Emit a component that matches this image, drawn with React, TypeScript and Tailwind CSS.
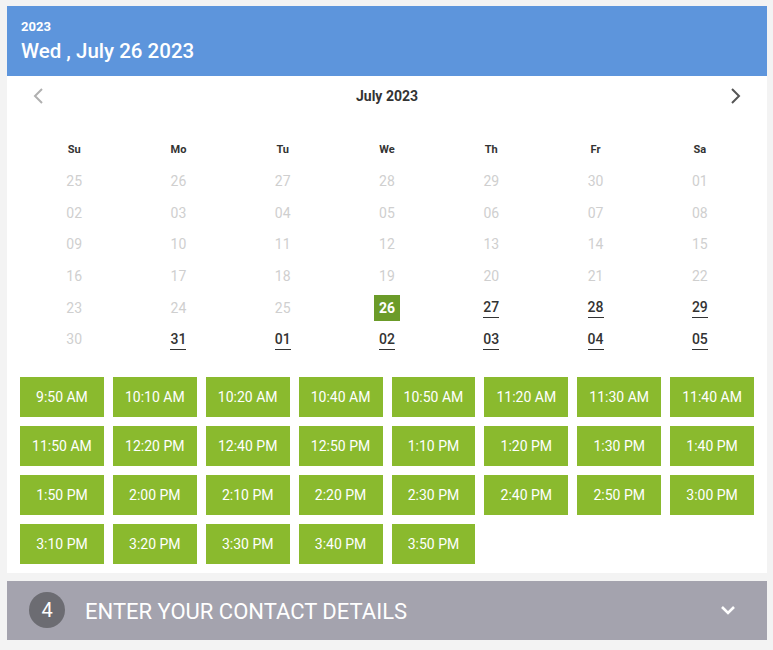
import React from "react";

const DAY_NAMES = ["Su", "Mo", "Tu", "We", "Th", "Fr", "Sa"];

type Day = { label: string; kind: "off" | "on" | "sel" };

const WEEKS: Day[][] = [
  ["25", "26", "27", "28", "29", "30", "01"].map((d) => ({ label: d, kind: "off" as const })),
  ["02", "03", "04", "05", "06", "07", "08"].map((d) => ({ label: d, kind: "off" as const })),
  ["09", "10", "11", "12", "13", "14", "15"].map((d) => ({ label: d, kind: "off" as const })),
  ["16", "17", "18", "19", "20", "21", "22"].map((d) => ({ label: d, kind: "off" as const })),
  [
    { label: "23", kind: "off" },
    { label: "24", kind: "off" },
    { label: "25", kind: "off" },
    { label: "26", kind: "sel" },
    { label: "27", kind: "on" },
    { label: "28", kind: "on" },
    { label: "29", kind: "on" },
  ],
  [
    { label: "30", kind: "off" },
    { label: "31", kind: "on" },
    { label: "01", kind: "on" },
    { label: "02", kind: "on" },
    { label: "03", kind: "on" },
    { label: "04", kind: "on" },
    { label: "05", kind: "on" },
  ],
];

const SLOTS = [
  "9:50 AM", "10:10 AM", "10:20 AM", "10:40 AM", "10:50 AM", "11:20 AM", "11:30 AM", "11:40 AM",
  "11:50 AM", "12:20 PM", "12:40 PM", "12:50 PM", "1:10 PM", "1:20 PM", "1:30 PM", "1:40 PM",
  "1:50 PM", "2:00 PM", "2:10 PM", "2:20 PM", "2:30 PM", "2:40 PM", "2:50 PM", "3:00 PM",
  "3:10 PM", "3:20 PM", "3:30 PM", "3:40 PM", "3:50 PM",
];

function DayCell({ day }: { day: Day }) {
  if (day.kind === "sel") {
    return (
      <span className="flex h-[26px] w-[26px] items-center justify-center bg-[#6b9b29] text-[14px] font-bold text-white">
        {day.label}
      </span>
    );
  }
  if (day.kind === "on") {
    return (
      <span className="border-b-[1.5px] border-[#333] pb-[1px] text-[14px] font-medium leading-[18px] text-[#333]">
        {day.label}
      </span>
    );
  }
  return <span className="text-[14px] text-[#cfcfcf]">{day.label}</span>;
}

export default function App() {
  return (
    <div
      className="h-[650px] w-[773px] bg-[#f3f3f3] pl-[7px] pr-[6px] pt-[6px]"
      style={{ fontFamily: "Roboto, 'Liberation Sans', sans-serif" }}
    >
      <div className="bg-white">
        {/* header */}
        <div className="flex h-[70px] flex-col justify-center bg-[#5d95dc] px-[14px] text-white">
          <div className="text-[13px] font-bold leading-[16px]">2023</div>
          <div className="mt-[3px] text-[20.5px] font-medium leading-[26px]">Wed , July 26 2023</div>
        </div>

        {/* month nav */}
        <div className="flex h-[40px] items-center justify-between px-[25px]">
          <svg width="12" height="18" viewBox="0 0 12 18" fill="none">
            <path d="M10 2 L3 9 L10 16" stroke="#b0b0b0" strokeWidth="2" />
          </svg>
          <div className="text-[14px] font-bold text-[#333]">July 2023</div>
          <svg width="12" height="18" viewBox="0 0 12 18" fill="none">
            <path d="M2 2 L9 9 L2 16" stroke="#555" strokeWidth="2" />
          </svg>
        </div>

        {/* calendar */}
        <div className="mt-[18px] px-[15px]">
          <div className="grid h-[32px] grid-cols-7 items-center">
            {DAY_NAMES.map((d) => (
              <div key={d} className="text-center text-[11px] font-bold text-[#333]">
                {d}
              </div>
            ))}
          </div>
          {WEEKS.map((week, i) => (
            <div key={i} className="grid h-[31.6px] grid-cols-7 items-center">
              {week.map((day, j) => (
                <div key={j} className="flex justify-center">
                  <DayCell day={day} />
                </div>
              ))}
            </div>
          ))}
        </div>

        {/* time slots */}
        <div className="mt-[21px] grid grid-cols-8 gap-[9px] px-[13px] pb-[9px]">
          {SLOTS.map((s) => (
            <div
              key={s}
              className="flex h-[40px] items-center justify-center bg-[#8aba2e] pt-[2px] text-[14px] text-white"
            >
              {s}
            </div>
          ))}
        </div>
      </div>

      {/* step 4 */}
      <div className="mt-[8px] flex h-[59px] items-center bg-[#a4a3ae] pl-[22px] pr-[31px] text-white">
        <div className="flex h-[36px] w-[36px] items-center justify-center rounded-full bg-[#6c6c72] text-[20px]">
          4
        </div>
        <div className="ml-[20px] flex-1 pt-[2px] text-[22px] uppercase">Enter your contact details</div>
        <svg width="16" height="10" viewBox="0 0 16 10" fill="none">
          <path d="M2 2 L8 8 L14 2" stroke="white" strokeWidth="2.6" />
        </svg>
      </div>
    </div>
  );
}
